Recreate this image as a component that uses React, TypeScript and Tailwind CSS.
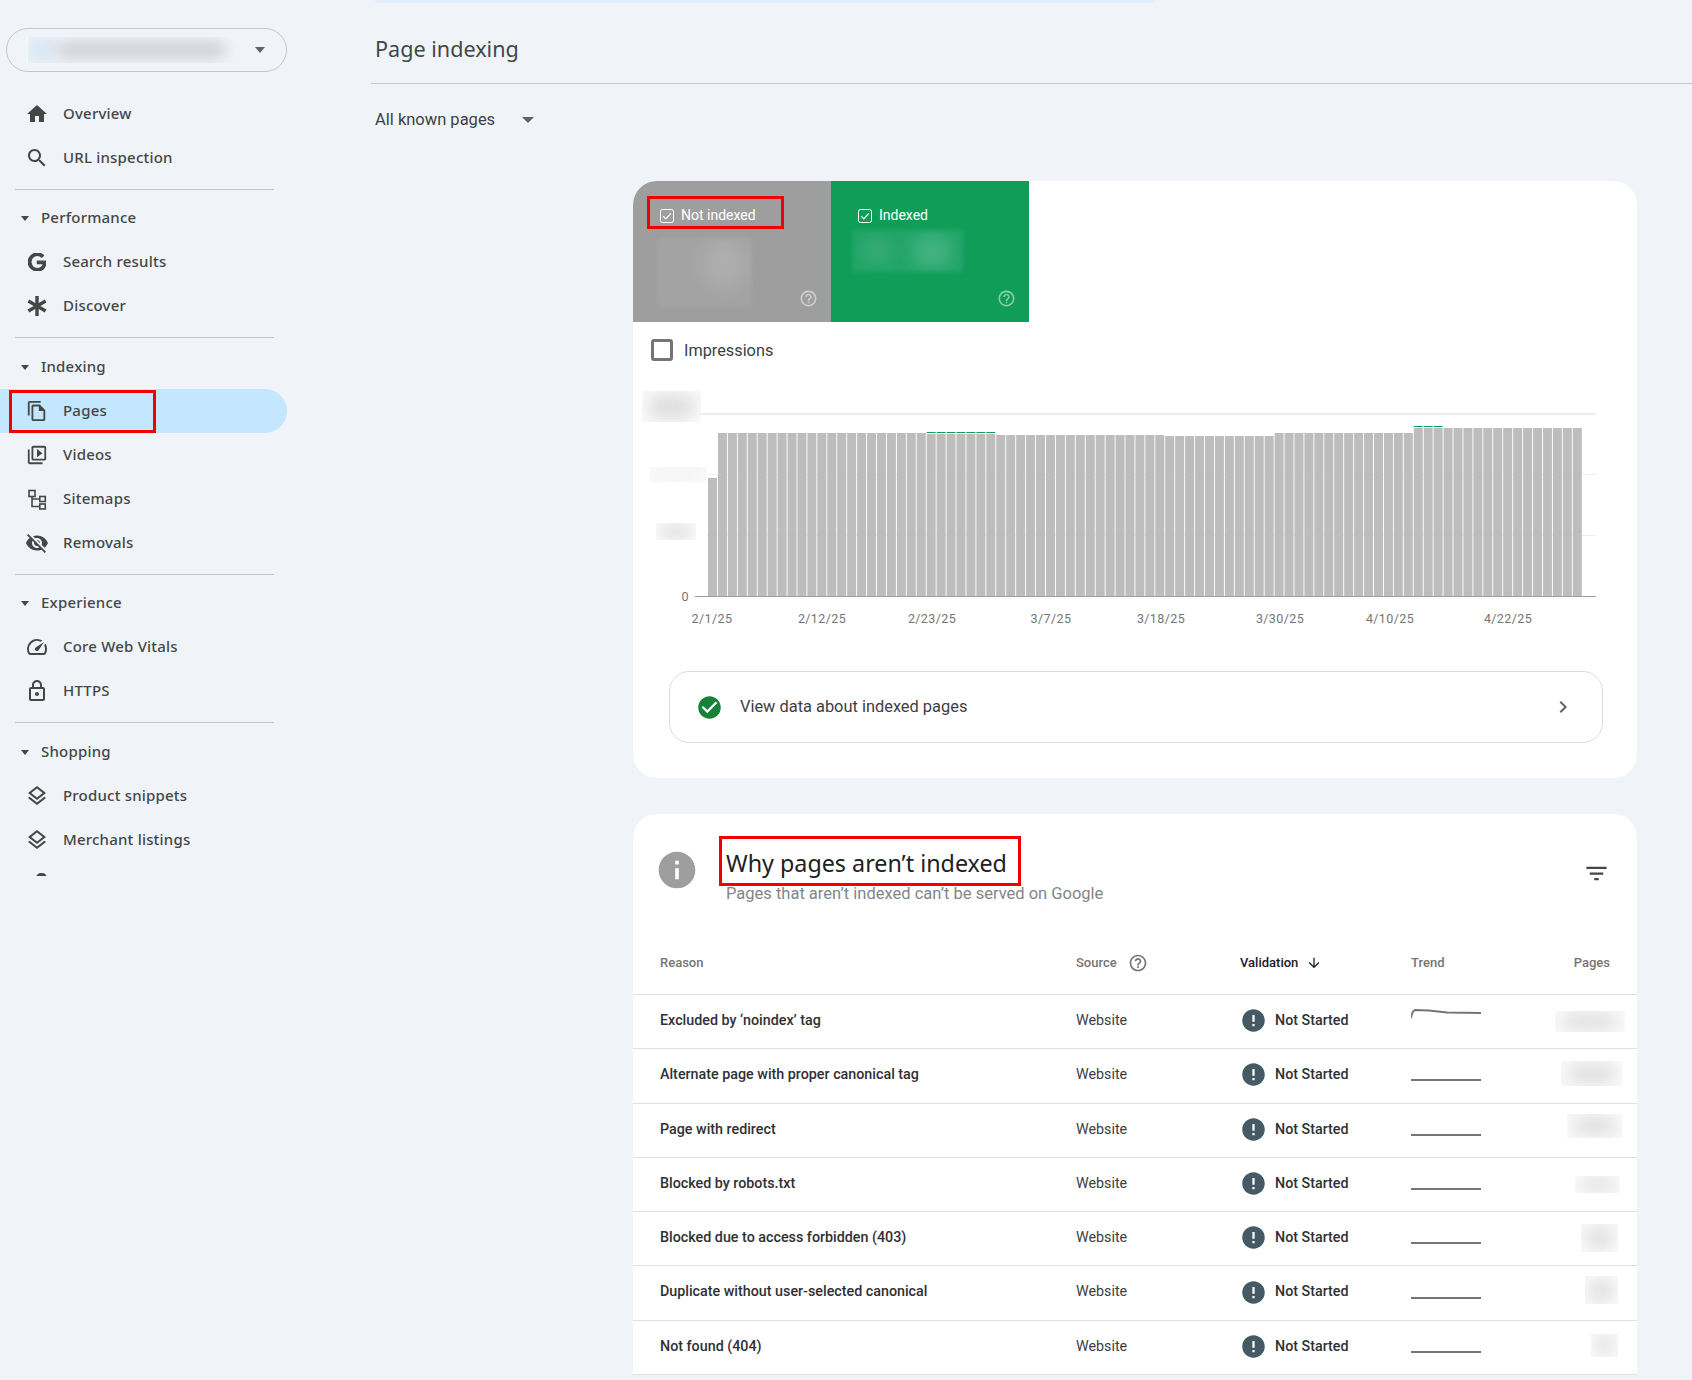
import type { ReactNode } from 'react'

const icons: Record<string, string> = {
    home: 'M10 20v-6h4v6h5v-8h3L12 3 2 12h3v8z',
    search: 'M15.5 14h-.79l-.28-.27C15.41 12.59 16 11.11 16 9.5 16 5.91 13.09 3 9.5 3S3 5.91 3 9.5 5.91 16 9.5 16c1.61 0 3.09-.59 4.23-1.57l.27.28v.79l5 4.99L20.49 19l-4.99-5zm-6 0C7.01 14 5 11.99 5 9.5S7.01 5 9.5 5 14 7.01 14 9.5 11.99 14 9.5 14z',
    pages: 'M16 1H4c-1.1 0-2 .9-2 2v14h2V3h12V1zm-1 4H8c-1.1 0-1.99.9-1.99 2L6 21c0 1.1.89 2 1.99 2H19c1.1 0 2-.9 2-2V11l-6-6zM8 21V7h6v5h5v9H8z',
    videos: 'M4 6H2v14c0 1.1.9 2 2 2h14v-2H4V6zm16-4H8c-1.1 0-2 .9-2 2v12c0 1.1.9 2 2 2h12c1.1 0 2-.9 2-2V4c0-1.1-.9-2-2-2zm0 14H8V4h12v12zM12 5.5v9l6-4.5z',
    removals: 'M12 7c2.76 0 5 2.24 5 5 0 .65-.13 1.26-.36 1.83l2.92 2.92c1.51-1.26 2.7-2.89 3.43-4.75-1.73-4.39-6-7.5-11-7.5-1.4 0-2.74.25-3.98.7l2.16 2.16C10.74 7.13 11.35 7 12 7zM2 4.27l2.28 2.28.46.46C3.08 8.3 1.78 10.02 1 12c1.73 4.39 6 7.5 11 7.5 1.55 0 3.03-.3 4.38-.84l.42.42L19.73 22 21 20.73 3.27 3 2 4.27zM7.53 9.8l1.55 1.55c-.05.21-.08.43-.08.65 0 1.66 1.34 3 3 3 .22 0 .44-.03.65-.08l1.55 1.55c-.67.33-1.41.53-2.2.53-2.76 0-5-2.24-5-5 0-.79.2-1.53.53-2.2zm4.31-.78l3.15 3.15.02-.16c0-1.66-1.34-3-3-3l-.17.01z',
    speed: 'M20.38 8.57l-1.23 1.85a8 8 0 0 1-.22 7.58H5.07A8 8 0 0 1 15.58 6.85l1.85-1.23A10 10 0 0 0 3.35 19a2 2 0 0 0 1.72 1h13.85a2 2 0 0 0 1.74-1 10 10 0 0 0-.27-10.44zm-9.79 6.84a2 2 0 0 0 2.83 0l5.66-8.49-8.49 5.66a2 2 0 0 0 0 2.83z',
    lock: 'M18 8h-1V6c0-2.76-2.24-5-5-5S7 3.24 7 6v2H6c-1.1 0-2 .9-2 2v10c0 1.1.9 2 2 2h12c1.1 0 2-.9 2-2V10c0-1.1-.9-2-2-2zM9 6c0-1.66 1.34-3 3-3s3 1.34 3 3v2H9V6zm9 14H6V10h12v10zm-6-3c1.1 0 2-.9 2-2s-.9-2-2-2-2 .9-2 2 .9 2 2 2z',
    layers: 'M11.99 18.54l-7.37-5.73L3 14.07l9 7 9-7-1.63-1.27-7.38 5.74zM12 16l7.36-5.73L21 9l-9-7-9 7 1.63 1.27L12 16zm0-11.47L17.74 9 12 13.47 6.26 9 12 4.53z',
    filter: 'M10 18h4v-2h-4v2zM3 6v2h18V6H3zm3 7h12v-2H6v2z',
    help: 'M11 18h2v-2h-2v2zm1-16C6.48 2 2 6.48 2 12s4.48 10 10 10 10-4.48 10-10S17.52 2 12 2zm0 18c-4.41 0-8-3.59-8-8s3.59-8 8-8 8 3.59 8 8-3.59 8-8 8zm0-14c-2.21 0-4 1.79-4 4h2c0-1.1.9-2 2-2s2 .9 2 2c0 2-3 1.75-3 5h2c0-2.25 3-2.5 3-5 0-2.21-1.79-4-4-4z',
    arrowDown: 'M20 12l-1.41-1.41L13 16.17V4h-2v12.17l-5.58-5.59L4 12l8 8 8-8z',
    chevron: 'M10 6L8.59 7.41 13.17 12l-4.58 4.59L10 18l6-6z',
    info: 'M12 2C6.48 2 2 6.48 2 12s4.48 10 10 10 10-4.48 10-10S17.52 2 12 2zm1 15h-2v-6h2v6zm0-8h-2V7h2v2z',
    alert: 'M12 2C6.48 2 2 6.48 2 12s4.48 10 10 10 10-4.48 10-10S17.52 2 12 2zm1 15h-2v-2h2v2zm0-4h-2V7h2v6z',
    checkCircle: 'M12 2C6.48 2 2 6.48 2 12s4.48 10 10 10 10-4.48 10-10S17.52 2 12 2zm-2 15l-5-5 1.41-1.41L10 14.17l7.59-7.59L19 8l-9 9z',
}

function Icon({ name, className }: { name: string; className: string }) {
    return (
        <svg viewBox="0 0 24 24" fill="currentColor" className={className}>
            <path d={icons[name]} />
        </svg>
    )
}

function GoogleIcon() {
    return (
        <svg viewBox="0 0 24 24" fill="currentColor" stroke="currentColor" strokeWidth="1.6" className="w-[18px] h-[18px] ml-[3px] mt-[3px]">
            <path d="M12.48 10.92v3.28h7.84c-.24 1.84-.853 3.187-1.787 4.133-1.147 1.147-2.933 2.4-6.053 2.4-4.827 0-8.6-3.893-8.6-8.72s3.773-8.72 8.6-8.72c2.6 0 4.507 1.027 5.907 2.347l2.307-2.307C18.747 1.44 16.133 0 12.48 0 5.867 0 .307 5.387.307 12s5.56 12 12.173 12c3.573 0 6.267-1.173 8.373-3.36 2.16-2.16 2.84-5.213 2.84-7.667 0-.76-.053-1.467-.173-2.053H12.48z" />
        </svg>
    )
}

function SitemapIcon() {
    return (
        <svg viewBox="0 0 24 24" fill="none" stroke="currentColor" strokeWidth="1.6" className="w-6 h-6">
            <rect x="4" y="3.5" width="6" height="6" />
            <rect x="14.8" y="9.5" width="5.5" height="5" />
            <rect x="14.8" y="17" width="5.5" height="5" />
            <path d="M7 9.5v10h8M7 12h8" />
        </svg>
    )
}

function AsteriskIcon() {
    return (
        <svg viewBox="0 0 24 24" fill="none" stroke="currentColor" strokeWidth="3.4" className="w-6 h-6">
            <path d="M12 2v20M3.4 7l17.2 10M3.4 17L20.6 7" />
        </svg>
    )
}

function Mask({ className, tone = 'bg-[#d4d4d4]' }: { className: string; tone?: string }) {
    return (
        <div className={`absolute overflow-hidden bg-[#fafafa] ${className}`}>
            <div className={`absolute inset-[10%] rounded-full blur-[8px] ${tone}`} />
        </div>
    )
}

function NavItem({ icon, label, active, children }: { icon: ReactNode; label: string; active?: boolean; children?: ReactNode }) {
    return (
        <div className={`relative flex items-center h-11 w-[287px] pl-[25px] gap-[14px] rounded-r-[22px] text-[#444746] ${active ? 'bg-[#c2e7ff]' : ''}`}>
            <div className="w-6 h-6 shrink-0">{icon}</div>
            <span className="-translate-y-px text-[15px] tracking-[0.2px] font-medium">{label}</span>
            {children}
        </div>
    )
}

function NavSection({ label, top = 'pt-[6px]', children }: { label: string; top?: string; children: ReactNode }) {
    return (
        <div className={`${top} pb-[9px]`}>
            <div className="flex items-center h-11 pl-[21px] gap-[12px] text-[#444746]">
                <div className="w-0 h-0 border-x-[4.5px] border-x-transparent border-t-[5px] border-t-[#444746]" />
                <span className="-translate-y-px text-[15px] tracking-[0.2px] font-medium">{label}</span>
            </div>
            {children}
        </div>
    )
}

const Divider = () => <div className="h-px ml-[15px] w-[259px] bg-[#c4c7c5]" />

function Sidebar() {
    return (
        <aside className="w-[371px] shrink-0 h-[876px] overflow-hidden pt-[28px] font-['Noto_Sans',sans-serif]">
            <div className="relative flex items-center justify-end ml-[6px] w-[281px] h-[44px] pr-[21px] rounded-full border border-[#c4c7c5]">
                <div className="absolute left-[19px] top-[8px] w-[215px] h-[26px] overflow-hidden">
                    <div className="absolute left-0 top-0 w-[2px] h-[26px] bg-white" />
                    <div className="absolute left-[2px] top-0 w-[28px] h-[26px] bg-[#dde9f5] blur-[4px]" />
                    <div className="absolute left-[30px] top-[4px] w-[170px] h-[18px] rounded-full bg-[#cfd2d6] blur-[7px]" />
                </div>
                <div className="w-0 h-0 border-x-[5px] border-x-transparent border-t-[6px] border-t-[#5f6368]" />
            </div>
            <div className="mt-[20px] pb-[9px]">
                <NavItem label="Overview" icon={<Icon name="home" className="w-6 h-6" />} />
                <NavItem label="URL inspection" icon={<Icon name="search" className="w-6 h-6" />} />
            </div>
            <Divider />
            <NavSection label="Performance">
                <NavItem label="Search results" icon={<GoogleIcon />} />
                <NavItem label="Discover" icon={<AsteriskIcon />} />
            </NavSection>
            <Divider />
            <NavSection label="Indexing" top="pt-[7px]">
                <NavItem active label="Pages" icon={<Icon name="pages" className="w-[22px] h-[22px] m-px" />}>
                    <div className="absolute left-[9px] top-[1px] w-[147px] h-[43px] border-[3px] border-[#f00000]" />
                </NavItem>
                <NavItem label="Videos" icon={<Icon name="videos" className="w-[22px] h-[22px] m-px" />} />
                <NavItem label="Sitemaps" icon={<SitemapIcon />} />
                <NavItem label="Removals" icon={<Icon name="removals" className="w-6 h-6" />} />
            </NavSection>
            <Divider />
            <NavSection label="Experience">
                <NavItem label="Core Web Vitals" icon={<Icon name="speed" className="w-6 h-6" />} />
                <NavItem label="HTTPS" icon={<Icon name="lock" className="w-6 h-6" />} />
            </NavSection>
            <Divider />
            <NavSection label="Shopping" top="pt-[7px]">
                <NavItem label="Product snippets" icon={<Icon name="layers" className="w-6 h-6" />} />
                <NavItem label="Merchant listings" icon={<Icon name="layers" className="w-6 h-6" />} />
                <div className="h-11 pl-[36px] pt-[11px]">
                    <div className="w-[11px] h-[6px] rounded-t-[5px] bg-[#444746]" />
                </div>
            </NavSection>
        </aside>
    )
}

function Tile({ label, color, mask }: { label: string; color: string; mask: ReactNode }) {
    return (
        <div className={`relative flex flex-col w-[198px] h-[141px] pl-[27px] pt-[27px] pr-[13px] pb-[14px] text-white ${color}`}>
            <div className="flex items-center gap-[7px] h-[14px]">
                <svg viewBox="0 0 14 14" fill="none" stroke="white" className="w-[14px] h-[14px] mt-[2px]">
                    <rect x="0.5" y="0.5" width="13" height="13" rx="2" />
                    <path d="M3.2 7.2l2.6 2.6 5-5.4" strokeWidth="1.2" />
                </svg>
                <span className="text-[14px] leading-none">{label}</span>
            </div>
            {mask}
            <Icon name="help" className="mt-auto self-end w-[19px] h-[19px] text-white/50" />
        </div>
    )
}

const bars = Array.from({ length: 88 }, (_, i) => {
    if (i === 0) return 478
    if (i <= 21) return 433
    if (i <= 28) return 434
    if (i <= 45) return 435
    if (i <= 56) return 436
    if (i <= 70) return 433
    return 428
})

const dates: [string, number][] = [
    ['2/1/25', 712], ['2/12/25', 822], ['2/23/25', 932], ['3/7/25', 1051],
    ['3/18/25', 1161], ['3/30/25', 1280], ['4/10/25', 1390], ['4/22/25', 1508],
]

function Chart() {
    return (
        <div className="relative h-[293px]">
            {/* coordinates in the viewBox are page pixels, easier to check against the picture */}
            <svg viewBox="633 378 1004 293" className="w-[1004px] h-[293px]">
                <rect x="701" y="413" width="895" height="2" fill="#eeeeee" />
                <rect x="707" y="474" width="889" height="1" fill="#eeeeee" />
                <rect x="707" y="535" width="889" height="1" fill="#eeeeee" />
                {bars.map((top, i) => (
                    <rect key={i} x={708 + i * 9.94} y={top} width="9" height={596 - top} fill="#bdbdbd" />
                ))}
                {bars.map((top, i) =>
                    (i >= 22 && i <= 28) || (i >= 71 && i <= 73) ? (
                        <rect key={i} x={708 + i * 9.94} y={top - 2} width="9" height="1" fill="#0f9d58" />
                    ) : null
                )}
                <rect x="695" y="596" width="901" height="1" fill="#9e9e9e" />
                <text x="685" y="596" textAnchor="middle" dominantBaseline="central" fontSize="12.5" fill="#757575">0</text>
                {dates.map(([d, x]) => (
                    <text key={d} x={x} y="618" textAnchor="middle" dominantBaseline="central" fontSize="12.5" letterSpacing="0.4" fill="#757575">{d}</text>
                ))}
            </svg>
            <Mask className="left-[9px] top-[13px] w-[59px] h-[31px]" tone="bg-[#dedede]" />
            <Mask className="left-[17px] top-[89px] w-[57px] h-[15px]" tone="bg-[#f2f2f2]" />
            <Mask className="left-[23px] top-[145px] w-[40px] h-[17px]" tone="bg-[#dcdcdc]" />
        </div>
    )
}

const rows: [string, string][] = [
    ['Excluded by ‘noindex’ tag', 'left-[922px] top-[16px] w-[70px] h-[21px]'],
    ['Alternate page with proper canonical tag', 'left-[928px] top-[12px] w-[61px] h-[25px]'],
    ['Page with redirect', 'left-[934px] top-[10px] w-[55px] h-[24px]'],
    ['Blocked by robots.txt', 'left-[942px] top-[18px] w-[45px] h-[17px]'],
    ['Blocked due to access forbidden (403)', 'left-[948px] top-[12px] w-[37px] h-[28px]'],
    ['Duplicate without user-selected canonical', 'left-[952px] top-[10px] w-[33px] h-[28px]'],
    ['Not found (404)', 'left-[958px] top-[13px] w-[27px] h-[23px]'],
]

function Trend({ first }: { first: boolean }) {
    return (
        <svg viewBox="0 0 70 12" fill="none" stroke="#757575" strokeWidth="2" className="w-[70px] h-[12px]">
            {first ? <path d="M0 10 Q1 3 4 2 L18 2.5 L36 4.5 L70 5" /> : <path d="M0 10H70" />}
        </svg>
    )
}

function ReasonTable() {
    return (
        <div>
            <div className="flex items-center h-[65px] pl-[27px] pt-[2px] text-[13px] font-medium text-[#757575] border-b border-[#e0e0e0]">
                <div className="w-[416px]">Reason</div>
                <div className="flex items-center w-[164px] gap-[11px]">
                    Source
                    <Icon name="help" className="w-[20px] h-[20px] text-[#757575]" />
                </div>
                <div className="flex items-center w-[171px] gap-[8px] text-[#202124]">
                    Validation
                    <Icon name="arrowDown" className="w-[16px] h-[16px]" />
                </div>
                <div className="w-[70px]">Trend</div>
                <div className="w-[129px] text-right">Pages</div>
            </div>
            {rows.map(([reason, mask], i) => (
                <div key={reason} className="relative flex items-center h-[54.3px] pl-[27px] pb-[2px] text-[14.3px] text-[#3c4043] border-b border-[#e0e0e0]">
                    <div className="w-[416px] font-medium text-[#303134]">{reason}</div>
                    <div className="w-[164px]">Website</div>
                    <div className="flex items-center w-[171px] gap-[10px] pl-[2px] font-medium text-[#303134]">
                        <Icon name="alert" className="w-[27px] h-[27px] -mx-[2px] text-[#455a64]" />
                        Not Started
                    </div>
                    <div className={trendOffset(i)}>
                        <Trend first={i === 0} />
                    </div>
                    <Mask className={mask} tone="bg-[#e0e0e0]" />
                </div>
            ))}
        </div>
    )
}

const trendOffset = (i: number) => (i === 0 ? '-mt-[13px]' : 'mt-[3px]')

export default function App() {
    return (
        <div className="flex w-[1692px] h-[1380px] overflow-hidden bg-[#f0f4f9] font-['Roboto',sans-serif]">
            <Sidebar />
            <main className="flex-1">
                <div className="h-[3px] ml-[4px] w-[780px] rounded-b-[8px] bg-[#e3ecfd]" />
                <div className="flex items-center h-[81px] pl-[4px] pt-[13px] border-b border-[#c4c7c5] text-[21.6px] text-[#444746] font-['Noto_Sans',sans-serif]">
                    Page indexing
                </div>
                <div className="flex items-center h-[24px] mt-[24px] pl-[4px] text-[16.5px] text-[#3c4043]">
                    All known pages
                    <div className="ml-[27px] w-0 h-0 border-x-[6px] border-x-transparent border-t-[6px] border-t-[#5f6368]" />
                </div>
                <section className="mt-[49px] ml-[262px] w-[1004px] pb-[35px] rounded-[24px] bg-white overflow-hidden">
                    <div className="relative flex">
                        <Tile label="Not indexed" color="bg-[#9e9e9e]" mask={
                            <div className="absolute left-[24px] top-[57px] w-[95px] h-[69px] overflow-hidden bg-[#a3a3a3] blur-[2px]">
                                <div className="absolute left-[45px] top-[0px] w-[45px] h-[50px] rounded-full bg-[#aeaeae] blur-[10px]" />
                            </div>
                        } />
                        <Tile label="Indexed" color="bg-[#0f9d58]" mask={
                            <div className="absolute left-[21px] top-[49px] w-[111px] h-[42px] overflow-hidden bg-[#22a568] blur-[2px]">
                                <div className="absolute left-[60px] top-[4px] w-[40px] h-[34px] rounded-full bg-[#43b281] blur-[8px]" />
                                <div className="absolute left-[10px] top-[8px] w-[30px] h-[26px] rounded-full bg-[#35ab75] blur-[7px]" />
                            </div>
                        } />
                        <div className="absolute left-[14px] top-[15px] w-[137px] h-[33px] border-[3px] border-[#f00000]" />
                    </div>
                    <div className="flex items-center h-[56px] pl-[18px] gap-[11px] text-[16.3px] text-[#3c4043]">
                        <div className="w-[22px] h-[22px] rounded-[3px] border-[3px] border-[#757575]" />
                        <span className="translate-y-px">Impressions</span>
                    </div>
                    <Chart />
                    <div className="flex items-center h-[72px] ml-[36px] mr-[34px] pl-[26px] pr-[27px] gap-[17px] rounded-[20px] border border-[#dadce0] text-[16.4px] text-[#3c4043]">
                        <Icon name="checkCircle" className="w-[27px] h-[27px] text-[#188038]" />
                        View data about indexed pages
                        <Icon name="chevron" className="ml-auto w-6 h-6 text-[#5f6368]" />
                    </div>
                </section>
                <section className="mt-[36px] ml-[262px] w-[1004px] rounded-t-[24px] bg-white">
                    <div className="flex h-[116px] pl-[24px] pr-[27px]">
                        <Icon name="info" className="mt-[34px] w-11 h-11 -mx-[2px] text-[#9e9e9e] shrink-0" />
                        <div className="relative ml-[29px] pt-[33px]">
                            <div className="text-[23.3px] leading-[32px] text-[#202124] font-['Noto_Sans',sans-serif]">Why pages aren’t indexed</div>
                            <div className="mt-[3px] text-[16.5px] leading-[24px] text-[#80868b]">Pages that aren’t indexed can’t be served on Google</div>
                            <div className="absolute -left-[7px] top-[22px] w-[302px] h-[50px] border-[3px] border-[#f00000]" />
                        </div>
                        <Icon name="filter" className="ml-auto mt-[46px] w-[27px] h-[27px] text-[#444746]" />
                    </div>
                    <ReasonTable />
                </section>
            </main>
        </div>
    )
}
